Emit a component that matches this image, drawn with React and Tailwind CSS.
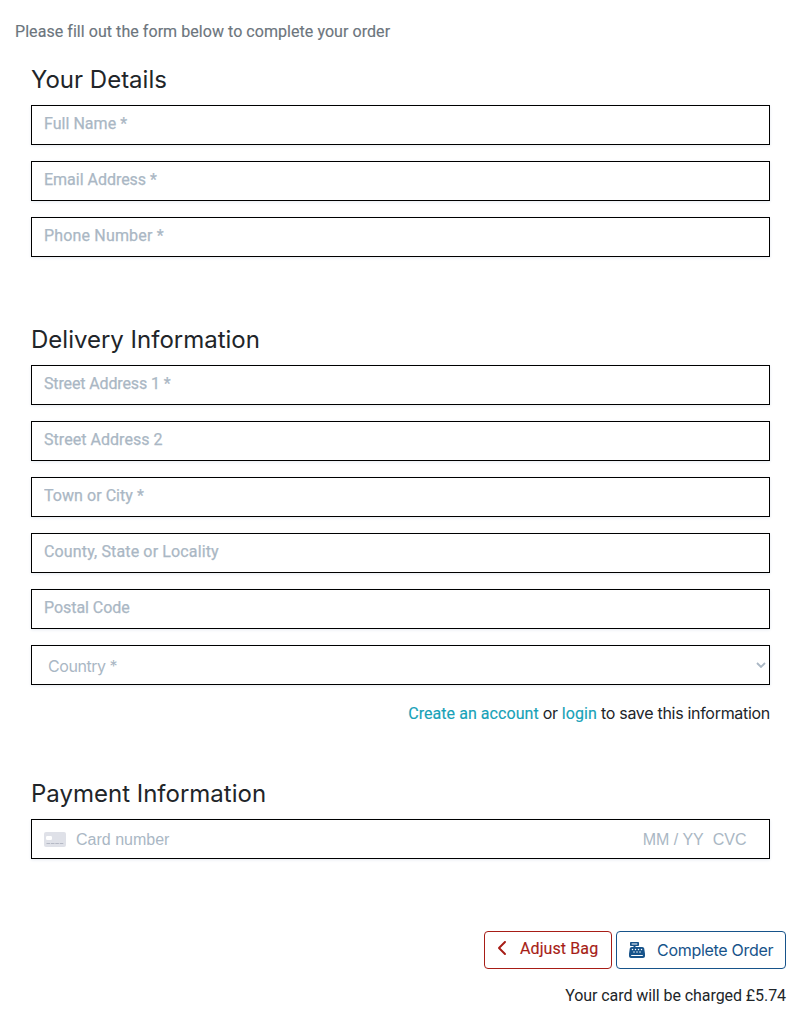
import { FaCashRegister, FaChevronLeft } from "react-icons/fa6";

const frame =
  "block h-10 w-full border border-black bg-white shadow-[0_1px_3px_0_#e6ebf1]";

// Roboto at a weight between regular and medium.
const label = "font-['Roboto',sans-serif] [-webkit-text-stroke:0.15px_currentColor]";

function Field({ text, spacing }) {
  return (
    <input
      placeholder={text}
      className={`${frame} px-3 pt-[5px] pb-[9px] font-['Roboto',sans-serif] text-base leading-6 text-[#212529] outline-none placeholder:text-[#aab7c4] placeholder:opacity-100 placeholder:[-webkit-text-stroke:0.25px_#aab7c4] ${spacing}`}
    />
  );
}

function Heading({ children }) {
  return (
    <h2 className="h-[38px] font-['Inter',sans-serif] text-2xl leading-[25px] whitespace-nowrap">
      {children}
    </h2>
  );
}

export default function App() {
  return (
    <main className="h-[1034px] w-[803px] overflow-hidden bg-white text-base text-[#212529]">
      <p className={`pt-5 pl-[15px] leading-6 text-[#6c757d] ${label}`}>
        <span className="tracking-[0.055px]">Please fill out the form below to complete your order</span>
      </p>
      <form className="pr-[33px] pl-[31px]" onSubmit={(e) => e.preventDefault()}>
        <section className="pt-[23px]">
          <Heading>Your Details</Heading>
          <div className="flex flex-col gap-4">
            <Field text="Full Name *" spacing="tracking-[0.03px]" />
            <Field text="Email Address *" spacing="tracking-[-0.02px]" />
            <Field text="Phone Number *" spacing="tracking-[0.17px]" />
          </div>
        </section>
        <section className="pt-[70px]">
          <Heading>Delivery Information</Heading>
          <div className="flex flex-col gap-4">
            <Field text="Street Address 1 *" spacing="tracking-[-0.13px]" />
            <Field text="Street Address 2" spacing="tracking-[0.04px]" />
            <Field text="Town or City *" spacing="tracking-[0.05px]" />
            <Field text="County, State or Locality" spacing="tracking-[0.14px]" />
            <Field text="Postal Code" spacing="tracking-[-0.05px]" />
            <button
              type="button"
              className={`${frame} flex items-center justify-between pt-0.5 pr-[3px] pl-4 text-left font-['Inter',sans-serif] text-[#aab7c4]`}
            >
              <span className="tracking-[-0.45px]">Country *</span>
              <svg width="10" height="6" viewBox="0 0 10 6" fill="none" stroke="currentColor" strokeWidth="1.8" className="-mt-0.5">
                <path d="M1 1l4 4 4-4" />
              </svg>
            </button>
          </div>
          <p className="flex h-[41px] items-baseline justify-end gap-1 pt-4 font-['Inter',sans-serif] leading-6 whitespace-nowrap">
            <a href="#" className={`tracking-[0.06px] text-[#17a2b8] ${label}`}>Create an account</a>
            <span className="tracking-[-0.3px]">or</span>
            <a href="#" className={`tracking-[0.1px] text-[#17a2b8] ${label}`}>login</a>
            <span className="tracking-[-0.3px]">to save this information</span>
          </p>
        </section>
        <section className="pt-[55px]">
          <Heading>Payment Information</Heading>
          <div
            className={`${frame} flex items-center pr-[22.5px] pl-3 font-['Liberation_Sans',sans-serif] text-[#aab7c4]`}
          >
            <svg width="22" height="15" viewBox="0 0 22 15" className="mt-px mr-2.5">
              <rect width="22" height="15" rx="2" fill="#dfe1e8" />
              <rect x="2" y="4" width="6" height="4" rx="1.2" fill="#fff" />
              <path d="M2.5 11.5h17" stroke="#b5b9c5" strokeDasharray="3.6 .8" />
            </svg>
            <span className="mt-px grow">Card number</span>
            <span className="mt-px mr-[9px]">MM / YY</span>
            <span className="mt-px">CVC</span>
          </div>
        </section>
      </form>
      <div className="flex justify-end gap-1 pt-[72px] pr-[17px] whitespace-nowrap">
        <a
          href="#"
          className={`flex h-[38px] w-32 items-center rounded border border-[#a71d16] pl-3 text-[#a71d16] ${label}`}
        >
          <FaChevronLeft className="mr-[11px] -mt-1 h-4 w-3" />
          <span className="-mt-[3px] tracking-[0.1px]">Adjust Bag</span>
        </a>
        <button
          type="button"
          className="flex h-[38px] w-[170px] items-center rounded border border-[#17538a] pl-3 font-['Inter',sans-serif] text-[#17538a]"
        >
          <FaCashRegister className="mr-3 h-4 w-4" />
          <span className="tracking-[-0.3px]">Complete Order</span>
        </button>
      </div>
      <p className="pt-[15px] pr-[17px] text-right font-['Roboto',sans-serif] leading-6">
        <span className="tracking-[-0.07px]">Your card will be charged £5.74</span>
      </p>
    </main>
  );
}
